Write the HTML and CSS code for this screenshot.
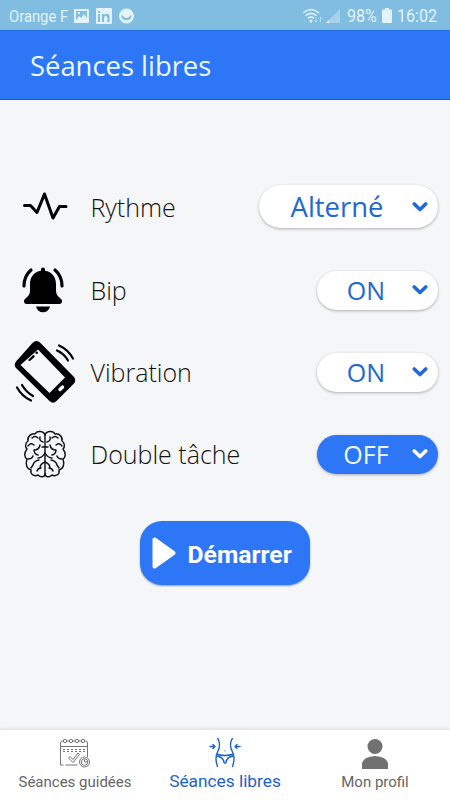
FILE: index.html
```html
<!DOCTYPE html>
<html lang="fr">
<head>
<meta charset="utf-8">
<meta name="viewport" content="width=device-width, initial-scale=1">
<title>Séances libres</title>
<link rel="stylesheet" href="styles.css">
</head>
<body>
<div class="app">
  <div class="status">
    <span class="status-text carrier">Orange F</span>
    <svg class="status-left" width="62" height="18" viewBox="0 0 62 18">
      <path fill-rule="evenodd" d="M1 2h13q1 0 1 1v12q0 1-1 1H1q-1 0-1-1V3q0-1 1-1zM2 4v9l3-4 2 2 3-4 3 4V4zM4 5h2v2H4z"/>
      <path fill-rule="evenodd" d="M23 1h14q1 0 1 1v14q0 1-1 1H23q-1 0-1-1V2q0-1 1-1zM24 7v8h2V7zM24 4v2h2V4zM28 7v8h2v-4q0-2 1.700-2t1.700 2v4h2.100v-5q0-3.300-3-3.300-1.500 0-2.500 1.300v-1z"/>
      <path fill-rule="evenodd" d="M52.500 1.500a7.500 7.500 0 1 1 0 15 7.500 7.500 0 0 1 0-15zM47.500 8c-.5 7 10.500 7 10 0q-1 0-1.500 1c-1.500 2.500-5.500 2.500-7 0q-.5-1-1.500-1z"/>
    </svg>
    <svg class="status-right" width="40" height="18" viewBox="0 0 40 18">
      <g fill="none" stroke="#e2f3fb" stroke-width="1.500">
        <path d="M1 6q8-7 16 0M3.500 8.700q5.500-4.700 11 0M6 11.300q3-2.400 6 0"/>
        <path d="M14 10.500v4.500m-1.500-1.500 1.500 1.500 1.500-1.500M18.500 15v-5m-1.500 1.500 1.500-1.500 1.500 1.500" stroke-width="1" opacity=".5"/>
      </g>
      <circle cx="9" cy="14" r="1.500"/>
      <path d="M24 16 38 2v14z" opacity=".4"/>
      <path d="M24 16l3-3v3z"/>
    </svg>
    <span class="status-text percent">98%</span>
    <svg class="battery" width="10" height="16" viewBox="0 0 10 16"><path d="M3 0h4v1.500h2q1 0 1 1V14q0 1-1 1H1q-1 0-1-1V2.500q0-1 1-1h2z"/></svg>
    <span class="status-text clock">16:02</span>
  </div>

  <header class="bar"><h1>Séances libres</h1></header>

  <main>
    <div class="row first">
      <svg class="icon" width="90" height="80" viewBox="0 0 90 80"><path d="M24.500 38.500h6l6.500 7L44.500 27 53 51l6.500-11.500H66" fill="none" stroke="#000" stroke-width="3" stroke-linecap="round" stroke-linejoin="round"/></svg>
      <span class="label">Rythme</span>
      <button class="pill large"><span class="value">Alterné</span><svg class="chevron" width="16" height="12" viewBox="0 0 16 12"><path d="M2.300 3 8 8.500 13.700 3"/></svg></button>
    </div>
    <div class="row">
      <svg class="icon" width="90" height="80" viewBox="0 0 90 80">
        <g transform="translate(0 -10)">
          <path d="M43 27.500q2 0 2 2v1.200c7 1 11 6.500 11 13.300v7q0 4 4.500 7.500 2.500 2.200 1 4.500-.7 1-2 1h-33q-1.300 0-2-1-1.500-2.300 1-4.500 4.500-3.500 4.500-7.500v-7c0-6.800 4-12.300 11-13.300v-1.200q0-2 2-2z"/>
          <path d="M36 66.500h14q-1.500 5.800-7 5.800t-7-5.800z"/>
          <path d="M31 30q-7 6-7 16M55 30q7 6 7 16" fill="none" stroke="#000" stroke-width="3.200" stroke-linecap="round"/>
        </g>
      </svg>
      <span class="label">Bip</span>
      <button class="pill"><span class="value">ON</span><svg class="chevron" width="16" height="12" viewBox="0 0 16 12"><path d="M2.300 3 8 8.500 13.700 3"/></svg></button>
    </div>
    <div class="row">
      <svg class="icon" width="90" height="80" viewBox="0 0 90 80">
        <g transform="translate(0 -1)">
          <path fill-rule="evenodd" d="M16 30.500 32.500 12q4-4 8 0L74 46q2.500 3.500 0 6.500L56.500 70q-3.500 3.500-7 0L16 37q-2.500-3 0-6.500zM20.500 34 49.500 62 65 46.500 38 18.500z"/>
          <path d="m60 58.500 2.500-2.500" stroke="#f5f6f8" stroke-width="3.400" stroke-linecap="round"/>
          <path d="m29.500 29 4-3.700" stroke="#000" stroke-width="2.300" stroke-linecap="round"/><circle cx="36.700" cy="21.700" r="1.300"/>
          <path d="M59 14.500q9 4 14 13M57 19.500q7 3 11 10M17 56.500q5 9 14 13M22 54q4 7 11 11" fill="none" stroke="#000" stroke-width="2.200" stroke-linecap="round"/>
        </g>
      </svg>
      <span class="label">Vibration</span>
      <button class="pill"><span class="value">ON</span><svg class="chevron" width="16" height="12" viewBox="0 0 16 12"><path d="M2.300 3 8 8.500 13.700 3"/></svg></button>
    </div>
    <div class="row">
      <svg class="icon" width="90" height="80" viewBox="0 0 90 80" fill="none" stroke="#111" stroke-width="1.450" stroke-linecap="round" stroke-linejoin="round">
        <g transform="translate(0 1)">
          <path d="M45 20v39"/>
          <g id="hemisphere">
            <path d="M45 20c-1-4-8-5-10-1-4-1-8 3-7 7-3 2-3 6-1 8-3 4-3 8 0 10-2 6 0 10 4 11-1 4 3 7 7 5 3 3 7 2 7-1"/>
            <path d="M32 23q3-3 6 0M40 22q-1 4 3 5M28 31q3-4 6-1M45 32h-3M34 35q5 0 6-5M34 35q0 4 4 5M28 44q4 0 5-3M45 38q-3 5-7 5M33 50q1-4 6-5M33 50l-2 3M45 47q-5 2-5 6M37 56q1-3 4-3"/>
          </g>
          <use href="#hemisphere" transform="translate(90 0) scale(-1 1)"/>
        </g>
      </svg>
      <span class="label">Double tâche</span>
      <button class="pill off"><span class="value">OFF</span><svg class="chevron" width="16" height="12" viewBox="0 0 16 12"><path d="M2.300 3 8 8.500 13.700 3"/></svg></button>
    </div>
    <button class="start"><svg width="24" height="32" viewBox="0 0 24 32"><path d="M2.500 2.500v27L21.500 16z" fill="#fff" stroke="#fff" stroke-width="4" stroke-linejoin="round"/></svg><span>Démarrer</span></button>
  </main>

  <nav>
    <a class="tab">
      <svg width="32" height="32" viewBox="0 0 32 32" fill="none" stroke="#777" stroke-width="1">
        <path d="M1.500 27V5q0-2 2-2h1.500m3 0h3m3 0h3m3 0h3m2 0h1.500q2 0 2 2v14M1.500 8.500h27M1.500 27h3m2 0h12"/>
        <circle cx="6" cy="3" r="1.700"/><circle cx="12" cy="3" r="1.700"/><circle cx="18" cy="3" r="1.700"/><circle cx="24" cy="3" r="1.700"/>
        <path d="M4 11.500h22M4 13.500h22" stroke-dasharray="2 2"/>
        <path d="m9.500 20 1.500-1.500 3 3L19 15l1.500 1.500-6.500 8z"/>
        <circle cx="25.500" cy="24" r="5"/><circle cx="25.500" cy="24" r="3.300"/><path d="M25.500 21.500V24h2.500"/>
      </svg>
      <span>Séances guidées</span>
    </a>
    <a class="tab active">
      <svg width="32" height="32" viewBox="0 0 32 32" fill="none" stroke="#1d62cb" stroke-width="1.400" stroke-linecap="round" stroke-linejoin="round">
        <path d="M8.500 0q4 7 0 14-3 6 0 14.500M23.500 0q-4 7 0 14 3 6 0 14.500M7.500 16q8.500 3 17 0M7.500 18q7 1 7.500 6.500 1 1.200 2 0 .5-5.500 7.500-6.500M1 8.500h5m-2-2 2 2-2 2M31 8.500h-5m2-2-2 2 2 2"/><path d="M16 12.500v.5" opacity=".5"/>
      </svg>
      <span>Séances libres</span>
    </a>
    <a class="tab">
      <svg width="32" height="32" viewBox="0 0 32 32" fill="#717171"><circle cx="16" cy="8.500" r="7.500"/><path d="M3 31v-6q2-6.500 13-7 11 .5 13 7v6z"/></svg>
      <span>Mon profil</span>
    </a>
  </nav>
</div>
</body>
</html>
```
FILE: styles.css
```css
* { box-sizing: border-box; }
body { margin: 0; background: #f5f6f8; }
button { border: 0; padding: 0; margin: 0; font: inherit; }
.app { width: 450px; height: 800px; display: flex; flex-direction: column; overflow: hidden; }
.status { height: 30px; flex: none; background: #81bde1; display: flex; align-items: center; padding: 1px 10px 0 9px; color: #e2f3fb; fill: #e2f3fb; font-family: Roboto, sans-serif; }
.status-text { display: block; white-space: nowrap; line-height: 28px; transform: scaleX(.87); transform-origin: left; }
.carrier { font-size: 17px; width: 65px; }
.status-right { margin-left: auto; }
.percent { font-size: 18.500px; width: 29px; margin-left: 5px; }
.battery { margin-left: 6px; }
.clock { font-size: 18.500px; width: 43px; margin-left: 5px; }
.bar { height: 70px; flex: none; background: #2d76f6; border-bottom: 1px solid #1a5ac8; border-top: 1px solid #216cde; display: flex; align-items: center; padding: 0 30px; }
h1 { margin: 2px 0 0; font: 400 27.400px/40px "Open Sans", sans-serif; color: #ebfaff; white-space: nowrap; }
main { flex: 1; display: flex; flex-direction: column; padding-top: 66px; }
.row { height: 82px; display: flex; align-items: center; padding-right: 12px; flex: none; }
.first { margin-bottom: 1px; }
.icon { width: 90px; height: 80px; flex: none; }
.label { font: 300 25px/36px "Open Sans", sans-serif; color: #111; white-space: nowrap; padding-left: .5px; }
.pill { margin-left: auto; width: 121px; height: 39px; border-radius: 22px; background: #fff; color: #1e68d0; display: flex; align-items: center; padding-right: 10px; box-shadow: 0 1px 3px rgba(0,0,0,.3); font: 400 25px/36px "Open Sans", sans-serif; }
.pill.large { width: 179px; height: 43px; font-size: 27.400px; margin-bottom: 1px; }
.value { flex: 1; text-align: center; padding-left: 3px; white-space: nowrap; }
.large .value { padding-top: 1px; }
.chevron { flex: none; fill: none; stroke: #2368d9; stroke-width: 3.600; stroke-linecap: round; stroke-linejoin: round; }
.off { background: #2d76f6; color: #ebfaff; }
.off .chevron { stroke: #fff; }
.start { align-self: center; margin-top: 26px; width: 170px; height: 64px; flex: none; border-radius: 22px; background: #2d76f6; box-shadow: 0 1px 2px rgba(0,50,120,.45); display: flex; align-items: center; padding-left: 12px; color: #fff; font: 700 24.700px/32px Roboto, sans-serif; white-space: nowrap; }
.start span { margin-left: 11.500px; margin-top: 3px; }
nav { height: 71px; flex: none; background: #fff; border-top: 1px solid #e8e9eb; display: flex; box-shadow: 0 -1px 3px rgba(0,0,0,.08); }
.tab { flex: 1; display: flex; flex-direction: column; align-items: center; padding-top: 8px; color: #666; font: 400 15px/20px Roboto, sans-serif; white-space: nowrap; }
.tab svg { flex: none; }
.tab span { margin-top: 2px; }
.active { color: #1d62cb; font-size: 17.300px; }
.active span { margin-top: 1px; }
```
